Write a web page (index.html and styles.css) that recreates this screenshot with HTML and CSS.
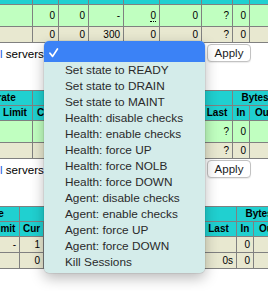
FILE: index.html
```html
<!DOCTYPE html>
<html lang="en">
<head>
    <meta charset="UTF-8">
    <meta name="viewport" content="width=device-width, initial-scale=1.0">
    <title>Statistics Report</title>
    <link rel="stylesheet" href="styles.css">
</head>
<body>

    <table class="tbl std first">
        <colgroup>
            <col><col><col><col><col><col><col><col><col><col><col>
        </colgroup>
        <tr class="titre">
            <th colspan="3">Session rate</th>
            <th colspan="6">Sessions</th>
            <th colspan="2">Bytes</th>
        </tr>
        <tr class="titre">
            <th>Cur</th><th>Max</th><th>Limit</th>
            <th>Cur</th><th>Max</th><th>Limit</th><th>Total</th><th>LbTot</th><th>Last</th>
            <th>In</th><th>Out</th>
        </tr>
        <tr class="active_up">
            <td></td><td></td><td></td>
            <td>0</td><td>0</td><td>-</td><td><u>0</u></td><td>0</td><td>?</td>
            <td>0</td><td></td>
        </tr>
        <tr class="backend">
            <td></td><td></td><td></td>
            <td>0</td><td>0</td><td>300</td><td>0</td><td>0</td><td>?</td>
            <td>0</td><td></td>
        </tr>
    </table>

    <form class="action">
        <span class="label"><span class="link">l</span> servers :</span>
        <div class="sel"></div>
        <button type="button" class="apply">Apply</button>
    </form>

    <table class="tbl std">
        <colgroup>
            <col><col><col><col><col><col><col><col><col><col><col>
        </colgroup>
        <tr class="titre">
            <th colspan="3">Session rate</th>
            <th colspan="6">Sessions</th>
            <th colspan="2">Bytes</th>
        </tr>
        <tr class="titre">
            <th>Cur</th><th>Max</th><th>Limit</th>
            <th>Cur</th><th>Max</th><th>Limit</th><th>Total</th><th>LbTot</th><th>Last</th>
            <th>In</th><th>Out</th>
        </tr>
        <tr class="active_up">
            <td></td><td></td><td></td>
            <td>0</td><td>0</td><td>-</td><td>0</td><td>0</td><td>?</td>
            <td>0</td><td></td>
        </tr>
        <tr class="backend">
            <td></td><td></td><td></td>
            <td>0</td><td>0</td><td>300</td><td>0</td><td>0</td><td>?</td>
            <td>0</td><td></td>
        </tr>
    </table>

    <form class="action">
        <span class="label"><span class="link">l</span> servers :</span>
        <div class="sel"></div>
        <button type="button" class="apply">Apply</button>
    </form>

    <table class="tbl wide">
        <colgroup>
            <col><col><col><col><col><col><col><col><col><col><col>
        </colgroup>
        <tr class="titre">
            <th colspan="3">Session rate</th>
            <th colspan="6">Sessions</th>
            <th colspan="2">Bytes</th>
        </tr>
        <tr class="titre">
            <th>Cur</th><th>Max</th><th>Limit</th>
            <th>Cur</th><th>Max</th><th>Limit</th><th>Total</th><th>LbTot</th><th>Last</th>
            <th>In</th><th>Out</th>
        </tr>
        <tr class="backend">
            <td></td><td></td><td>-</td>
            <td>1</td><td>1</td><td>-</td><td>1</td><td>0</td><td></td>
            <td>0</td><td></td>
        </tr>
        <tr class="backend">
            <td></td><td></td><td></td>
            <td>0</td><td>1</td><td>300</td><td>1</td><td>0</td><td>0s</td>
            <td>0</td><td></td>
        </tr>
    </table>

    <div class="menu">
        <div class="item checked">
            <svg width="10" height="10" viewBox="0 0 10 10"><path d="M1 5.2 L3.6 8.4 L8.4 1" fill="none" stroke="#fff" stroke-width="1.7" stroke-linecap="round" stroke-linejoin="round"/></svg>
        </div>
        <div class="item">Set state to READY</div>
        <div class="item">Set state to DRAIN</div>
        <div class="item">Set state to MAINT</div>
        <div class="item">Health: disable checks</div>
        <div class="item">Health: enable checks</div>
        <div class="item">Health: force UP</div>
        <div class="item">Health: force NOLB</div>
        <div class="item">Health: force DOWN</div>
        <div class="item">Agent: disable checks</div>
        <div class="item">Agent: enable checks</div>
        <div class="item">Agent: force UP</div>
        <div class="item">Agent: force DOWN</div>
        <div class="item">Kill Sessions</div>
    </div>

</body>
</html>
```

FILE: styles.css
```css
body {
    margin: 0;
    overflow: hidden;
    font-family: "Liberation Sans", Arial, sans-serif;
    font-size: 11.6px;
    color: #000;
    background: #fff;
}
.tbl {
    border-collapse: collapse;
    table-layout: fixed;
    font-size: 10px;
}
.tbl th, .tbl td {
    border: 1px solid #808080;
    padding: 0 3px;
    height: 14px;
    line-height: 12px;
    white-space: nowrap;
    overflow: hidden;
}
.tbl td {
    text-align: right;
}
.tbl th {
    font-weight: bold;
    text-align: center;
}
.tbl u {
    text-decoration: none;
    border-bottom: 1px dotted #000;
}
.titre {
    background: #20d0d0;
}
.active_up {
    background: #c0ffc0;
}
.active_up td {
    height: 21px;
}
.backend {
    background: #e8e8d0;
}
.backend td {
    height: 15px;
}

/* column grid of the two upper tables */
.std {
    width: 338px;
    margin-left: -61px;
}
.std col:nth-child(1) { width: 29px; }
.std col:nth-child(2) { width: 29px; }
.std col:nth-child(3) { width: 35px; }
.std col:nth-child(4) { width: 26px; }
.std col:nth-child(5) { width: 30px; }
.std col:nth-child(6) { width: 35px; }
.std col:nth-child(7) { width: 36px; }
.std col:nth-child(8) { width: 42px; }
.std col:nth-child(9) { width: 31px; }
.std col:nth-child(10) { width: 17px; }
.std col:nth-child(11) { width: 28px; }
.first {
    margin-top: -26px;
}

/* lower table has wider columns */
.wide {
    width: 353px;
    margin-left: -72px;
}
.wide col:nth-child(1) { width: 29px; }
.wide col:nth-child(2) { width: 30px; }
.wide col:nth-child(3) { width: 32px; }
.wide col:nth-child(4) { width: 24px; }
.wide col:nth-child(5) { width: 28px; }
.wide col:nth-child(6) { width: 34px; }
.wide col:nth-child(7) { width: 40px; }
.wide col:nth-child(8) { width: 55px; }
.wide col:nth-child(9) { width: 36px; }
.wide col:nth-child(10) { width: 17px; }
.wide col:nth-child(11) { width: 28px; }

.action {
    display: flex;
    align-items: center;
    height: 18px;
    margin: 1px 0 28px;
}
.label {
    flex: none;
    width: 48px;
    white-space: nowrap;
}
.link {
    color: #1d5fe0;
}
.sel {
    flex: none;
    width: 157px;
    height: 16px;
}
.apply {
    flex: none;
    margin-left: 2px;
    width: 44px;
    height: 18px;
    padding: 0;
    border: 1px solid #c2c2c2;
    border-radius: 4px;
    background: #fff;
    box-shadow: 0 1px 1px rgba(0, 0, 0, 0.08);
    font-family: "Liberation Sans", Arial, sans-serif;
    font-size: 11.5px;
    color: #1a1a1a;
}

.menu {
    position: absolute;
    left: 44px;
    top: 41px;
    width: 161px;
    padding-bottom: 3px;
    background: #d4ecea;
    border-radius: 5px;
    box-shadow: 0 0 0 0.5px rgba(0, 0, 0, 0.12), 0 5px 14px rgba(0, 0, 0, 0.28);
    overflow: hidden;
    font-size: 11.8px;
    color: #2a2a2a;
}
.item {
    height: 16px;
    line-height: 16px;
    padding-left: 21px;
    white-space: nowrap;
}
.item.checked {
    position: relative;
    height: 21px;
    background: #3b82f6;
}
.item.checked svg {
    position: absolute;
    left: 5px;
    top: 7px;
}
```
